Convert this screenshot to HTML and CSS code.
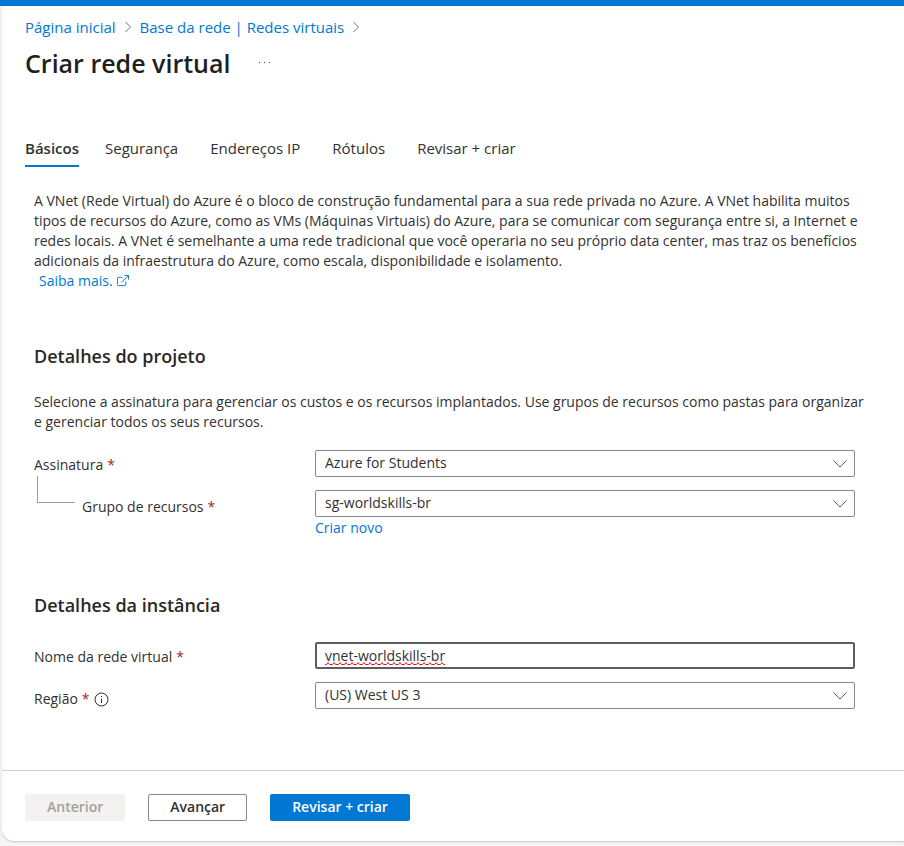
FILE: index.html
```html
<!DOCTYPE html>
<html lang="pt-BR">
<head>
<meta charset="utf-8">
<meta name="viewport" content="width=device-width, initial-scale=1">
<title>Criar rede virtual</title>
<link rel="stylesheet" href="styles.css">
</head>
<body>
<div class="topbar"></div>
<div class="blade">
  <header class="header">
    <nav class="breadcrumb" aria-label="Trilha">
      <a href="#">Página inicial</a>
      <svg class="crumb-arrow" viewBox="0 0 8 12" aria-hidden="true"><path d="M1.5 1l5 5-5 5"/></svg>
      <a href="#">Base da rede | Redes virtuais</a>
      <svg class="crumb-arrow" viewBox="0 0 8 12" aria-hidden="true"><path d="M1.5 1l5 5-5 5"/></svg>
    </nav>
    <div class="title-row">
      <h1>Criar rede virtual</h1>
      <button class="more" type="button" aria-label="Mais opções"><svg viewBox="0 0 14 2" aria-hidden="true"><path d="M1 0h1v1H1zM6 0h1v1H6zM11 0h1v1h-1z"/></svg></button>
    </div>
    <nav class="tabs">
      <a class="tab active" href="#">Básicos</a>
      <a class="tab" href="#">Segurança</a>
      <a class="tab" href="#">Endereços IP</a>
      <a class="tab" href="#">Rótulos</a>
      <a class="tab" href="#">Revisar + criar</a>
    </nav>
  </header>
  <main class="content">
    <p>A VNet (Rede Virtual) do Azure é o bloco de construção fundamental para a sua rede privada no Azure. A VNet habilita muitos tipos de recursos do Azure, como as VMs (Máquinas Virtuais) do Azure, para se comunicar com segurança entre si, a Internet e redes locais. A VNet é semelhante a uma rede tradicional que você operaria no seu próprio data center, mas traz os benefícios adicionais da infraestrutura do Azure, como escala, disponibilidade e isolamento.</p>
    <a class="learn" href="#">Saiba mais.
      <svg class="external" viewBox="0 0 13 13" aria-hidden="true"><path d="M6 2.5H1.5a1 1 0 0 0-1 1v7a1 1 0 0 0 1 1h7a1 1 0 0 0 1-1V7M8 .5h4.500V5M12.500.5L5 8"/></svg>
    </a>

    <h2>Detalhes do projeto</h2>
    <p>Selecione a assinatura para gerenciar os custos e os recursos implantados. Use grupos de recursos como pastas para organizar e gerenciar todos os seus recursos.</p>
    <div class="fields">
      <div class="field">
        <label for="sub">Assinatura <span class="req">*</span></label>
        <div class="control">
          <select id="sub"><option>Azure for Students</option></select>
          <svg class="chevron" viewBox="0 0 14 8" aria-hidden="true"><path d="M.5.5L7 7 13.500.5"/></svg>
        </div>
      </div>
      <div class="field">
        <label class="nested" for="rg">Grupo de recursos <span class="req">*</span></label>
        <div class="control">
          <select id="rg"><option>sg-worldskills-br</option></select>
          <svg class="chevron" viewBox="0 0 14 8" aria-hidden="true"><path d="M.5.5L7 7 13.500.5"/></svg>
        </div>
        <a class="create" href="#">Criar novo</a>
      </div>
    </div>

    <h2>Detalhes da instância</h2>
    <div class="fields">
      <div class="field">
        <label for="name">Nome da rede virtual <span class="req">*</span></label>
        <div class="control">
          <input id="name" type="text" value="vnet-worldskills-br" spellcheck="false">
          <svg class="squiggle" aria-hidden="true"><defs><pattern id="wave" width="6" height="3" patternUnits="userSpaceOnUse"><path d="M0 2.500h1.500L3 .5l1.500 2H6"/></pattern></defs><rect width="100%" height="3" fill="url(#wave)" stroke="none"/></svg>
        </div>
      </div>
      <div class="field">
        <label for="region">Região <span class="req">*</span>
          <svg class="info" viewBox="0 0 15 15" aria-hidden="true"><circle cx="7.500" cy="7.500" r="6.500"/><path d="M7.500 6.500V11M7.500 4v1"/></svg>
        </label>
        <div class="control">
          <select id="region"><option>(US) West US 3</option></select>
          <svg class="chevron" viewBox="0 0 14 8" aria-hidden="true"><path d="M.5.5L7 7 13.500.5"/></svg>
        </div>
      </div>
    </div>
  </main>
  <footer class="footer">
    <button class="btn" type="button" disabled>Anterior</button>
    <button class="btn outline" type="button">Avançar</button>
    <button class="btn primary" type="button">Revisar + criar</button>
  </footer>
</div>
</body>
</html>
```
FILE: styles.css
```css
* { box-sizing: border-box; }
body {
  margin: 0;
  background: #f5f5f5;
  color: #323130;
  font: 14px/20px "Open Sans", "Noto Sans", sans-serif;
}
a { color: #0078d4; text-decoration: none; }
button, input, select { font: inherit; color: inherit; }
p, h1, h2 { margin: 0; }
svg { fill: none; stroke: currentColor; flex: none; }

.topbar { height: 6px; background: #0078d4; }
.blade {
  margin-left: 2px;
  margin-bottom: 5px;
  background: #fff;
  border-bottom-left-radius: 12px;
  box-shadow: 0 1px 2px rgba(0, 0, 0, .2);
}
.header { padding: 11px 23px 0; }
.breadcrumb { display: flex; align-items: center; gap: 8px; font-size: 15px; }
.crumb-arrow { width: 8px; height: 12px; color: #767676; }
.title-row { display: flex; align-items: center; gap: 28px; margin-top: 10px; }
h1 { font-size: 25px; line-height: 32px; font-weight: 600; color: #201f1e; }
.more { display: flex; padding: 0; border: 0; background: none; }
.more svg { width: 14px; height: 2px; fill: #444; stroke: none; }
.tabs { display: flex; gap: 32px; margin-top: 59px; font-size: 15px; }
.tab { color: #323130; padding-bottom: 7px; border-bottom: 2px solid transparent; }
.tab.active { margin-right: -6px; font-weight: 600; border-color: #0078d4; }

.content { padding: 24px 33px 0 32px; }
.learn { display: flex; align-items: center; gap: 4px; padding-left: 5px; }
.external { width: 12px; height: 12px; }
h2 { margin: 53px 0 24px; font-size: 18px; line-height: 24px; font-weight: 600; color: #292827; }
.fields { display: grid; gap: 10px; margin: 18px 16px 54px 0; }
h2 + .fields { margin-top: 25px; }
.field { display: grid; grid-template-columns: 281px 1fr; align-items: start; }
.field label { grid-row: 1 / span 2; display: flex; align-items: center; gap: 4px; line-height: 30px; }
.field + .field label { line-height: 34px; }
.req { color: #a4262c; }
.nested { position: relative; padding-left: 48px; }
.nested::before {
  content: "";
  position: absolute;
  left: 3px;
  top: -14px;
  width: 37px;
  height: 26px;
  border: solid #a19f9d;
  border-width: 0 0 1px 1px;
}
.control { position: relative; }
.control select, .control input {
  display: block;
  width: 100%;
  height: 27px;
  padding: 0 9px 2px;
  border: 1px solid #8a8886;
  border-radius: 2px;
  background: #fff;
  appearance: none;
  outline: 0;
}
.control input { border: 2px solid #605e5c; padding: 0 8px; }
.chevron { position: absolute; right: 8px; top: 10px; width: 14px; height: 8px; color: #605e5c; pointer-events: none; }
.squiggle { position: absolute; left: 10px; bottom: 4px; width: 120px; height: 3px; stroke: #e81123; }
.create { grid-column: 2; line-height: 22px; }
.info { width: 15px; height: 15px; }

.footer { display: flex; gap: 23px; padding: 23px 23px 20px; border-top: 1px solid #d2d0ce; }
.btn {
  height: 27px;
  padding: 0 22px 2px;
  border: 0;
  border-radius: 2px;
  background: #f3f2f1;
  font-weight: 600;
  color: #a19f9d;
}
.btn.outline { background: #fff; border: 1px solid #8a8886; padding: 0 21px 1px; color: #323130; }
.btn.primary { background: #0078d4; color: #fff; }
```
